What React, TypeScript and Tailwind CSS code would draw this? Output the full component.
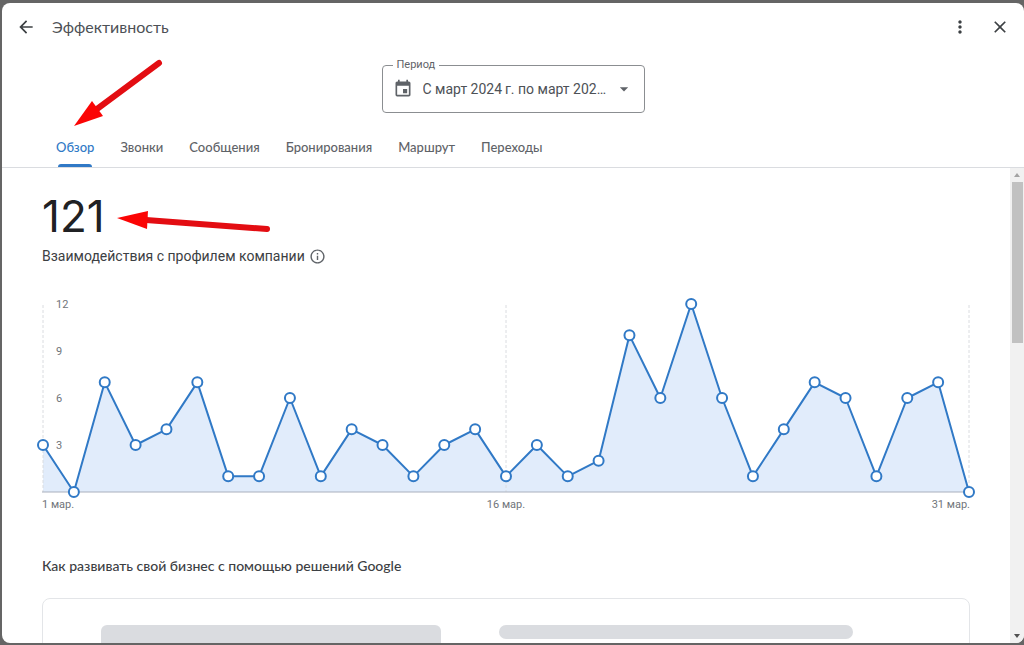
import { useState } from 'react'
import { MdArrowBack, MdArrowDropDown, MdClose, MdEvent, MdInfoOutline, MdMoreVert } from 'react-icons/md'

const tabs = ['Обзор', 'Звонки', 'Сообщения', 'Бронирования', 'Маршрут', 'Переходы']

// Взаимодействия по дням, 1–31 марта
const values = [
  3, 0, 7, 3, 4, 7, 1, 1, 6, 1, 4, 3, 1, 3, 4, 1, 3, 1, 2, 10, 6, 12, 6, 1, 4, 7, 6, 1, 6, 7, 0,
]

const CHART_WIDTH = 928
const BASELINE = 200
const PLOT_HEIGHT = 188
const MAX_VALUE = 12

const getX = (index: number) => 1 + (index * (CHART_WIDTH - 2)) / (values.length - 1)
const getY = (value: number) => BASELINE - (value * PLOT_HEIGHT) / MAX_VALUE

function InteractionsChart() {
  const points = values.map((value, index) => ({ x: getX(index), y: getY(value) }))
  const line = points.map((p) => `${p.x},${p.y}`).join(' ')
  const area = `${getX(0)},${BASELINE} ${line} ${getX(values.length - 1)},${BASELINE}`

  return (
    <svg
      viewBox={`0 0 ${CHART_WIDTH} 220`}
      className="block h-auto w-full overflow-visible"
      role="img"
      aria-label="Взаимодействия с профилем компании по дням"
    >
      <polygon points={area} fill="#e1ecfb" />
      {[0, 15, 30].map((day) => (
        <line
          key={day}
          x1={getX(day)}
          x2={getX(day)}
          y1={13}
          y2={BASELINE}
          stroke="#dadce0"
          strokeDasharray="3 2"
        />
      ))}
      <line x1={0} x2={CHART_WIDTH} y1={BASELINE} y2={BASELINE} stroke="#a9b0bd" />
      <polyline points={line} fill="none" stroke="#3079c6" strokeWidth={2} strokeLinejoin="round" />
      {points.map((p, index) => (
        <circle key={index} cx={p.x} cy={p.y} r={5} fill="#fff" stroke="#3079c6" strokeWidth={2} />
      ))}
      <g className="font-['Roboto',sans-serif] text-[11px]" fill="#70757a">
        {[12, 9, 6, 3].map((value) => (
          <text key={value} x={14} y={getY(value) + 4}>
            {value}
          </text>
        ))}
        <text x={0} y={216}>1 мар.</text>
        <text x={CHART_WIDTH / 2} y={216} textAnchor="middle">16 мар.</text>
        <text x={CHART_WIDTH} y={216} textAnchor="end">31 мар.</text>
      </g>
    </svg>
  )
}

function Annotations() {
  return (
    <svg
      className="pointer-events-none absolute top-0 left-0"
      width="280"
      height="240"
      viewBox="0 0 280 240"
      aria-hidden="true"
    >
      <g stroke="#e30d12" strokeWidth={6} strokeLinecap="round">
        <line x1={159} y1={63} x2={97} y2={109} />
        <line x1={267} y1={229} x2={146} y2={220} />
      </g>
      <g fill="#fb0505">
        <path d="M74 126 92 101 103 116Z" />
        <path d="M117 218 148 211 147 229Z" />
      </g>
    </svg>
  )
}

function Scrollbar() {
  return (
    <div className="flex w-3.5 shrink-0 flex-col items-center bg-[#f1f1f1]" aria-hidden="true">
      <div className="flex h-3.5 items-center">
        <svg width="6" height="4" viewBox="0 0 6 4">
          <path d="M0 4 3 0 6 4Z" fill="#a3a3a3" />
        </svg>
      </div>
      <div className="min-h-0 flex-1">
        <div className="h-[36%] w-[11px] bg-[#c1c1c1]" />
      </div>
      <div className="flex h-3.5 items-center">
        <svg width="6" height="4" viewBox="0 0 6 4">
          <path d="M0 0 3 4 6 0Z" fill="#505050" />
        </svg>
      </div>
    </div>
  )
}

export default function App() {
  const [activeTab, setActiveTab] = useState('Обзор')

  return (
    <div className="relative h-screen bg-[#656565] pt-[3px] pb-0.5 pl-0.5 font-['Roboto','Liberation_Sans',sans-serif]">
      <div className="flex h-full flex-col overflow-hidden rounded-lg bg-white">
        {/* Header */}
        <header className="flex h-12 shrink-0 items-center px-3.5 text-[#3c4043]">
          <button aria-label="Назад">
            <MdArrowBack className="text-xl" />
          </button>
          <h1 className="ml-4 flex-1 font-['Lato',sans-serif] text-base text-[#4d5156]">Эффективность</h1>
          <button aria-label="Ещё">
            <MdMoreVert className="text-xl" />
          </button>
          <button aria-label="Закрыть" className="ml-5">
            <MdClose className="text-xl" />
          </button>
        </header>

        {/* Period */}
        <div className="flex shrink-0 justify-center">
          <fieldset className="mt-1.5 h-14 w-[263px] min-w-0 rounded border border-[#8b8e91] px-2">
            <legend className="ml-0.5 px-1 text-[11px] leading-4 text-[#5f6368]">
              <label htmlFor="period">Период</label>
            </legend>
            <div className="flex h-8 items-center text-[#5f6368]">
              <MdEvent className="ml-0.5 shrink-0 text-xl" />
              <select
                id="period"
                className="ml-2.5 w-0 flex-1 appearance-none truncate bg-transparent text-sm text-[#4d5156]"
              >
                <option>С март 2024{'\u2009'}г. по март 2025{'\u2009'}г.</option>
              </select>
              <MdArrowDropDown className="mr-0.5 ml-1 shrink-0 text-xl" />
            </div>
          </fieldset>
        </div>

        {/* Tabs */}
        <nav
          role="tablist"
          className="mt-[15px] flex h-10 shrink-0 gap-[26px] border-b border-[#dadce0] px-[54px] font-['Lato',sans-serif] text-[13px] font-medium"
        >
          {tabs.map((tab) => (
            <button
              key={tab}
              role="tab"
              aria-selected={tab === activeTab}
              onClick={() => setActiveTab(tab)}
              className={`flex flex-col items-stretch ${tab === activeTab ? 'text-[#3079c6]' : 'text-[#5f6368]'}`}
            >
              <span className="flex flex-1 items-center pt-[3px]">{tab}</span>
              <span className={`mx-0.5 h-[3px] rounded-t ${tab === activeTab ? 'bg-[#3079c6]' : 'bg-transparent'}`} />
            </button>
          ))}
        </nav>

        <div className="flex min-h-0 flex-1">
          <main className="min-w-0 flex-1 overflow-hidden px-10 pt-6">
            <p className="font-['Inter',sans-serif] text-[44px] leading-12 text-[#202124]">121</p>
            <div className="mt-1 flex h-6 items-center gap-1 text-[#3c4043]">
              <h2 className="text-sm">Взаимодействия с профилем компании</h2>
              <button aria-label="Подробнее">
                <MdInfoOutline className="text-[17px] text-[#5f6368]" />
              </button>
            </div>

            <div className="mt-6">
              <InteractionsChart />
            </div>

            {/* Suggestions */}
            <h2 className="mt-[42px] font-['Lato',sans-serif] text-sm leading-6 font-medium text-[#3c4043]">
              Как развивать свой бизнес с помощью решений Google
            </h2>
            <section className="mt-5 flex h-60 gap-[58px] rounded-lg border border-[#e3e5e8] px-[58px] pt-[26px]">
              <div className="h-40 w-[42%] rounded-md bg-[#dadce0]" />
              <div className="flex-1">
                <div className="h-3.5 w-[86%] rounded-full bg-[#dadce0]" />
              </div>
            </section>
          </main>
          <Scrollbar />
        </div>
      </div>
      <Annotations />
    </div>
  )
}
